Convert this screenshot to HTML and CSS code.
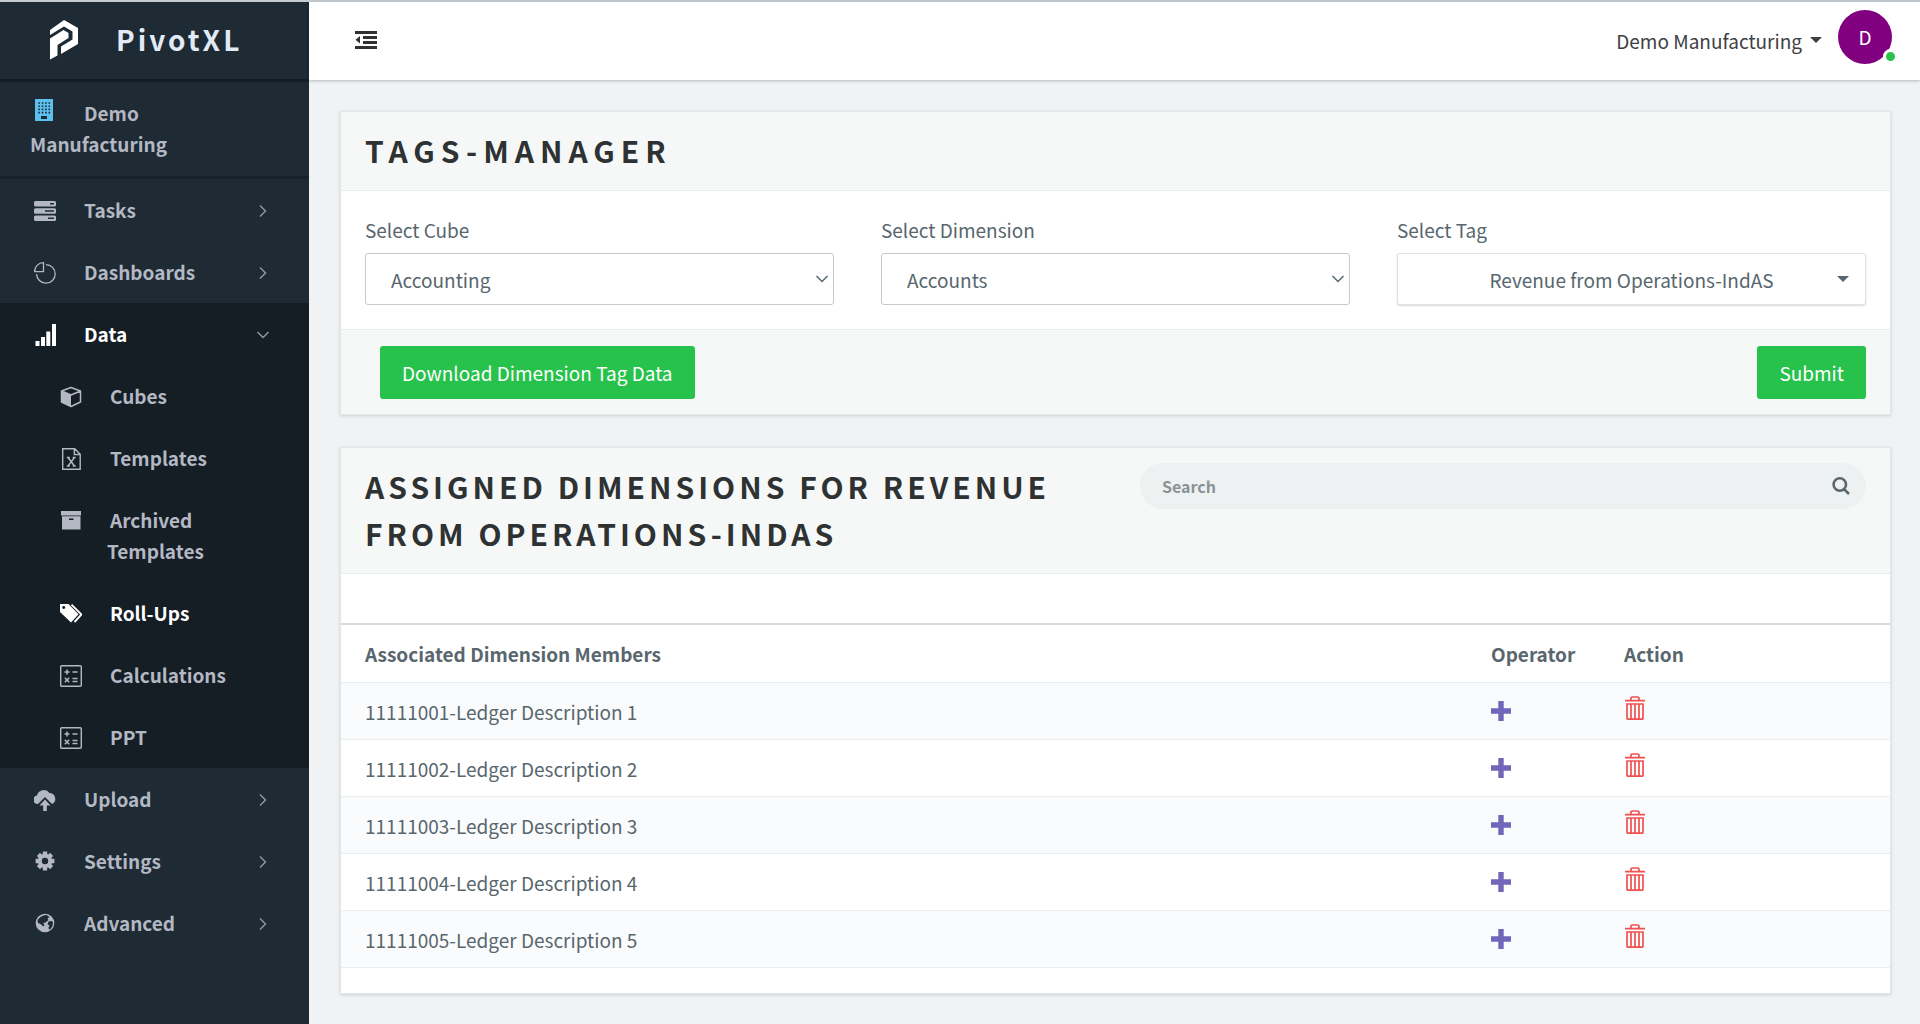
FILE: index.html
```html
<!DOCTYPE html>
<html lang="en">
<head>
<meta charset="utf-8">
<title>PivotXL</title>
<link rel="stylesheet" href="styles.css">
</head>
<body>
<svg class="sprite" aria-hidden="true">
  <symbol id="i-right" viewBox="0 0 16 16"><path fill="none" stroke="currentColor" stroke-width="1.5" d="M5 2.5l5.5 5.500L5 13.500"/></symbol>
  <symbol id="i-down" viewBox="0 0 16 16"><path fill="none" stroke="currentColor" stroke-width="1.500" d="M2.500 5L8 10.500 13.500 5"/></symbol>
  <symbol id="i-plus" viewBox="0 0 20 20"><path fill="currentColor" d="M7.300 0h5.400v7.300H20v5.400h-7.300V20H7.300v-7.300H0V7.300h7.300z"/></symbol>
  <symbol id="i-trash" viewBox="0 0 20 24"><path fill="none" stroke="currentColor" stroke-width="1.700" d="M0 4.700h20M6 4.500V2.300Q6 1 7.300 1h5.400Q14 1 14 2.300v2.200M2 8h16v14.200q0 1-1 1H3q-1 0-1-1zM6 8v15M10 8v15M14 8v15"/></symbol>
  <symbol id="i-calc" viewBox="0 0 22 22"><rect x=".7" y=".7" width="20.600" height="20.600" rx="1" fill="none" stroke="currentColor" stroke-width="1.400"/><path fill="none" stroke="currentColor" stroke-width="1.500" d="M4.500 7h5M7 4.500v5M12.500 7h5M4.800 12.800l4.400 4.400M9.200 12.800l-4.400 4.400M12.500 13.600h5M12.500 16.600h5"/></symbol>
</svg>
<div class="app">
  <aside class="sidebar">
    <a class="brand" href="#">
      <svg class="brand-mark" viewBox="0 0 28 40"><path fill="#fff" d="M0 10L14 0l14 8v16L11 34v-7.500l11.500-7v-8L14 6.500 0 15zM0 18.500L13.500 10l5 3v5l-11 7v10.500L0 39.500z"/></svg>
      <span>PivotXL</span>
    </a>
    <a class="company" href="#"><svg class="icon company-icon" viewBox="0 0 22 22"><path fill="#5bc0ee" d="M2 0h18v22H2z"/><path stroke="#1e2a34" stroke-width="1.600" stroke-dasharray="1.600 1.800" d="M5.300 4h12M5.300 7.200h12M5.300 10.400h12M5.300 13.600h12"/><path fill="#1e2a34" d="M8 17h6v3H8z"/></svg>Demo Manufacturing</a>
    <nav class="menu">
      <a class="item" href="#"><svg class="icon" viewBox="0 0 22 22"><path fill="currentColor" fill-rule="evenodd" d="M1.500 1h19Q22 1 22 2.500v2.500Q22 6.500 20.500 6.500h-19Q0 6.500 0 5v-2.500Q0 1 1.500 1zM16 3v1.500h4V3zM1.500 8.200h19Q22 8.200 22 9.700v2.500q0 1.500-1.500 1.500h-19Q0 13.700 0 12.200v-2.500Q0 8.200 1.500 8.200zM11 10.200v1.500h9v-1.500zM1.500 15.400h19q1.500 0 1.500 1.500v2.500q0 1.500-1.500 1.500h-19Q0 20.900 0 19.400v-2.500Q0 15.400 1.500 15.400zM14 17.400v1.500h6v-1.500z"/></svg><span>Tasks</span><svg class="chev"><use href="#i-right"/></svg></a>
      <a class="item" href="#"><svg class="icon" viewBox="0 0 22 22"><path fill="none" stroke="currentColor" stroke-width="1.300" d="M12 2.600A9.300 9.300 0 1 1 2.600 12M9.500.7v9h-9A9 9 0 0 1 9.500.7z"/></svg><span>Dashboards</span><svg class="chev"><use href="#i-right"/></svg></a>
      <div class="group">
        <a class="item current" href="#"><svg class="icon" viewBox="0 0 22 22"><path fill="currentColor" d="M1.500 17h4v5h-4zM7 13h4v9H7zM12.300 7.500h4V22h-4zM18 0h4v22h-4z"/></svg><span>Data</span><svg class="chev"><use href="#i-down"/></svg></a>
        <a class="item sub" href="#"><svg class="icon" viewBox="0 0 22 22"><path fill="none" stroke="currentColor" stroke-width="1.500" stroke-linejoin="round" d="M11 1.500L20.500 5v11L11 20.500 1.500 16V5zM1.500 5L11 9l9.500-4"/><path fill="currentColor" d="M1.500 5L11 9v11.500L1.500 16z"/></svg><span>Cubes</span></a>
        <a class="item sub" href="#"><svg class="icon" viewBox="0 0 22 22"><path fill="none" stroke="currentColor" stroke-width="1.400" d="M2.700.7h12l5.500 5.500v15.100H2.700zM14.300.7v5.800h6M8 9.500l6.500 8.500M14.500 9.500L8 18M6.800 9.500h3M12.700 9.500h3M6.800 18h3M12.700 18h3"/></svg><span>Templates</span></a>
        <a class="item sub" href="#"><svg class="icon" viewBox="0 0 22 22"><path fill="currentColor" fill-rule="evenodd" d="M1 1h20v4.500H1zM2 6.200h18.500v13.300H2zM9 8.500v1.500h4.500V8.500z"/></svg><span>Archived<br>Templates</span></a>
        <a class="item sub current" href="#"><svg class="icon" viewBox="0 0 22 22"><path fill="currentColor" fill-rule="evenodd" d="M0 1h8.500L18.500 11.300 11 19.500 0 9zM3.700 3a1.500 1.500 0 1 0 .01 0z"/><path fill="none" stroke="currentColor" stroke-width="1.900" d="M11.500 1.600L21.500 11.500 14.500 19"/></svg><span>Roll-Ups</span></a>
        <a class="item sub" href="#"><svg class="icon"><use href="#i-calc"/></svg><span>Calculations</span></a>
        <a class="item sub" href="#"><svg class="icon"><use href="#i-calc"/></svg><span>PPT</span></a>
      </div>
      <a class="item" href="#"><svg class="icon" viewBox="0 0 22 22"><path fill="currentColor" d="M4 15a4.200 4.200 0 0 1-1-8.500A7 7 0 0 1 15.500 4 5.800 5.800 0 0 1 18 15L11 8zM11 10.500l5.500 6h-3.700V22H9.200v-5.500H5.500z"/></svg><span>Upload</span><svg class="chev"><use href="#i-right"/></svg></a>
      <a class="item" href="#"><svg class="icon" viewBox="0 0 22 22"><circle cx="11" cy="10" r="5.200" fill="none" stroke="currentColor" stroke-width="4"/><path stroke="currentColor" stroke-width="4.400" d="M11 .6v4M11 15.400v4M1.600 10h4M16.400 10h4M4.400 3.400l3 3M14.600 13.600l3 3M17.600 3.400l-3 3M7.400 13.600l-3 3"/></svg><span>Settings</span><svg class="chev"><use href="#i-right"/></svg></a>
      <a class="item" href="#"><svg class="icon" viewBox="0 0 22 22"><circle cx="11" cy="10" r="9.300" fill="currentColor"/><path fill="#1e2a34" d="M9.500 2.500l3-.5 3 2-2 1.500 1 1.500-3 2.500-2.500.5 1.500 2-1 1.500-3-2.500-2.500-1-.500-3 3-3zM17.500 8l1.500 1-.5 4-2 3-1.500.500-.500-2 1-2-2-1.500 1-2.500z"/></svg><span>Advanced</span><svg class="chev"><use href="#i-right"/></svg></a>
    </nav>
  </aside>
  <div class="main">
    <header class="topbar">
      <button class="toggle" type="button" aria-label="Toggle menu"><svg viewBox="0 0 22 18" width="22" height="18"><path fill="currentColor" d="M0 0h22v3H0zM8 5h14v3H8zM8 10h14v3H8zM0 15h22v3H0zM5 5v7.500L.5 8.700z"/></svg></button>
      <div class="user">
        <button class="tenant" type="button">Demo Manufacturing<span class="caret"></span></button>
        <a class="avatar" href="#">D<span class="status"></span></a>
      </div>
    </header>
    <main class="content">
      <form class="card">
        <div class="card-head"><h1 class="title wide">Tags-Manager</h1></div>
        <div class="fields">
          <div class="field"><label for="cube">Select Cube</label>
            <div class="control"><select id="cube"><option>Accounting</option></select><svg class="select-arrow"><use href="#i-down"/></svg></div></div>
          <div class="field"><label for="dim">Select Dimension</label>
            <div class="control"><select id="dim"><option>Accounts</option></select><svg class="select-arrow"><use href="#i-down"/></svg></div></div>
          <div class="field"><label for="tag">Select Tag</label>
            <div class="control"><select id="tag" class="tag"><option>Revenue from Operations-IndAS</option></select><span class="caret tag-caret"></span></div></div>
        </div>
        <div class="card-foot"><button class="btn" type="button">Download Dimension Tag Data</button><button class="btn" type="submit">Submit</button></div>
      </form>
      <section class="card">
        <div class="card-head list-head">
          <h2 class="title">Assigned Dimensions for Revenue from Operations-IndAS</h2>
          <div class="search"><input type="search" placeholder="Search" aria-label="Search"><svg viewBox="0 0 18 18" width="18" height="18"><path fill="none" stroke="currentColor" stroke-width="2.600" d="M11.800 11.800L17 17M14 7.500a6.200 6.200 0 1 1-12.400 0 6.200 6.200 0 0 1 12.400 0z"/></svg></div>
        </div>
        <table class="members">
          <thead><tr><th>Associated Dimension Members</th><th class="op">Operator</th><th class="act">Action</th></tr></thead>
          <tbody>
            <tr><td>11111001-Ledger Description 1</td><td><svg class="plus"><use href="#i-plus"/></svg></td><td><button class="del" type="button" aria-label="Delete"><svg><use href="#i-trash"/></svg></button></td></tr>
            <tr><td>11111002-Ledger Description 2</td><td><svg class="plus"><use href="#i-plus"/></svg></td><td><button class="del" type="button" aria-label="Delete"><svg><use href="#i-trash"/></svg></button></td></tr>
            <tr><td>11111003-Ledger Description 3</td><td><svg class="plus"><use href="#i-plus"/></svg></td><td><button class="del" type="button" aria-label="Delete"><svg><use href="#i-trash"/></svg></button></td></tr>
            <tr><td>11111004-Ledger Description 4</td><td><svg class="plus"><use href="#i-plus"/></svg></td><td><button class="del" type="button" aria-label="Delete"><svg><use href="#i-trash"/></svg></button></td></tr>
            <tr><td>11111005-Ledger Description 5</td><td><svg class="plus"><use href="#i-plus"/></svg></td><td><button class="del" type="button" aria-label="Delete"><svg><use href="#i-trash"/></svg></button></td></tr>
          </tbody>
        </table>
      </section>
    </main>
  </div>
</div>
</body>
</html>
```
FILE: styles.css
```css
* { box-sizing: border-box; }
body {
  margin: 0;
  font: 19px/31px "Noto Sans CJK SC", "Noto Sans", sans-serif;
  color: #58666e;
  background: #f0f2f4;
}
a { color: inherit; text-decoration: none; }
button, select, input { font: inherit; color: inherit; }
svg { display: block; flex: none; }
.sprite { position: absolute; width: 0; height: 0; }
.app {
  display: grid;
  grid-template-columns: 309px minmax(0, 1fr);
  min-height: 100vh;
  border-top: 2px solid #c4cbd0;
}

/* Sidebar */
.sidebar { background: #1e2a34; color: #b3b8c3; font-weight: 700; }
.brand {
  display: flex;
  align-items: center;
  gap: 38px;
  height: 80px;
  padding: 0 0 2px 50px;
  border-bottom: 3px solid #141d25;
  color: #e2eaf6;
  font-size: 28px;
  letter-spacing: 3px;
}
.brand-mark { width: 28px; height: 40px; }
.company {
  display: block;
  padding: 15px 60px 17px 30px;
  border-bottom: 3px solid #17212a;
}
.company-icon { display: inline-block; margin: 0 29px 0 3px; }
.icon { width: 22px; height: 22px; }
.item {
  display: flex;
  align-items: flex-start;
  padding: 15px 38px 16px 34px;
}
.item span { flex: 1; padding-left: 25px; text-indent: 3px; }
.item br + * { text-indent: 0; }
.item .icon { margin-top: 6px; }
.chev { width: 16px; height: 16px; margin-top: 9px; color: #8d959e; }
.group { background: #151d25; }
.sub { padding-left: 60px; }
.current { color: #fff; }

/* Top bar */
.topbar {
  display: flex;
  align-items: center;
  justify-content: space-between;
  height: 78px;
  padding: 0 28px 2px 46px;
  background: #fff;
  box-shadow: 0 1px 3px rgba(0, 0, 0, .25);
}
.toggle, .tenant, .del { padding: 0; border: 0; background: none; }
.toggle { color: #2f3133; }
.user { display: flex; align-items: center; gap: 16px; }
.tenant { display: flex; align-items: center; gap: 8px; color: #3d4144; }
.caret {
  border: 6px solid transparent;
  border-top-color: currentColor;
  border-bottom: 0;
}
.avatar {
  position: relative;
  width: 54px;
  height: 54px;
  margin-bottom: 6px;
  border-radius: 50%;
  background: #800080;
  color: #fff;
  line-height: 54px;
  text-align: center;
}
.status {
  position: absolute;
  right: -6px;
  bottom: 0;
  width: 15px;
  height: 15px;
  border: 3px solid #fff;
  border-radius: 50%;
  background: #28c24c;
}

/* Cards */
.content { padding: 31px 29px 31px 31px; display: grid; gap: 32px; }
.card {
  border: 1px solid #e4e7e9;
  background: #fff;
  box-shadow: 0 1px 3px rgba(0, 0, 0, .15);
}
.card-head { padding: 15px 24px 16px; background: #f6f8f8; border-bottom: 1px solid #e9edee; }
.title {
  margin: 0;
  color: #2f3232;
  font-size: 30px;
  line-height: 47px;
  letter-spacing: 4px;
  text-transform: uppercase;
}
.wide { letter-spacing: 6px; }
.fields {
  display: grid;
  grid-template-columns: repeat(3, minmax(0, 1fr));
  gap: 47px;
  padding: 23px 24px 24px;
}
.field label { display: block; margin-bottom: 8px; }
.control { position: relative; }
.control select {
  appearance: none;
  display: block;
  width: 100%;
  height: 52px;
  padding: 0 25px;
  border: 1px solid #c5c9cb;
  border-radius: 3px;
  background: #fff;
}
.control .tag {
  text-align: center;
  text-align-last: center;
  border-color: #dfe3e4;
  box-shadow: 0 1px 2px rgba(0, 0, 0, .15);
}
.select-arrow { position: absolute; right: 4px; top: 18px; width: 16px; height: 16px; }
.tag-caret { position: absolute; right: 17px; top: 23px; }
.card-foot {
  display: flex;
  justify-content: space-between;
  padding: 16px 24px 15px 39px;
  background: #f6f8f8;
  border-top: 1px solid #e9edee;
}
.btn {
  height: 53px;
  padding: 0 22px;
  border: 0;
  border-radius: 3px;
  background: #27c24c;
  color: #fff;
}
.list-head {
  display: grid;
  grid-template-columns: minmax(0, 1fr) 726px;
  gap: 48px;
}
.search {
  display: flex;
  align-items: center;
  height: 46px;
  padding: 0 16px 0 22px;
  border-radius: 23px;
  background: #edf1f2;
}
.search input {
  flex: 1;
  min-width: 0;
  padding: 0;
  border: 0;
  background: none;
  font-size: 16px;
  font-weight: 700;
}
.search input::placeholder { color: #8b9296; opacity: 1; }

/* Members table */
.members {
  width: 100%;
  margin: 49px 0 25px;
  border-top: 2px solid #d8dbdd;
  border-spacing: 0;
  table-layout: fixed;
}
.members th, .members td {
  height: 57px;
  padding: 0 0 0 24px;
  text-align: left;
  border-bottom: 1px solid #e9edef;
}
.members th { height: 58px; }
.members tbody tr:nth-child(odd) { background: #fafbfc; }
.members .op { width: 133px; }
.members .act { width: 290px; }
.plus { width: 20px; height: 20px; color: #7266ba; }
.del { margin-left: 1px; color: #f05050; }
.del svg { width: 20px; height: 24px; }
```
